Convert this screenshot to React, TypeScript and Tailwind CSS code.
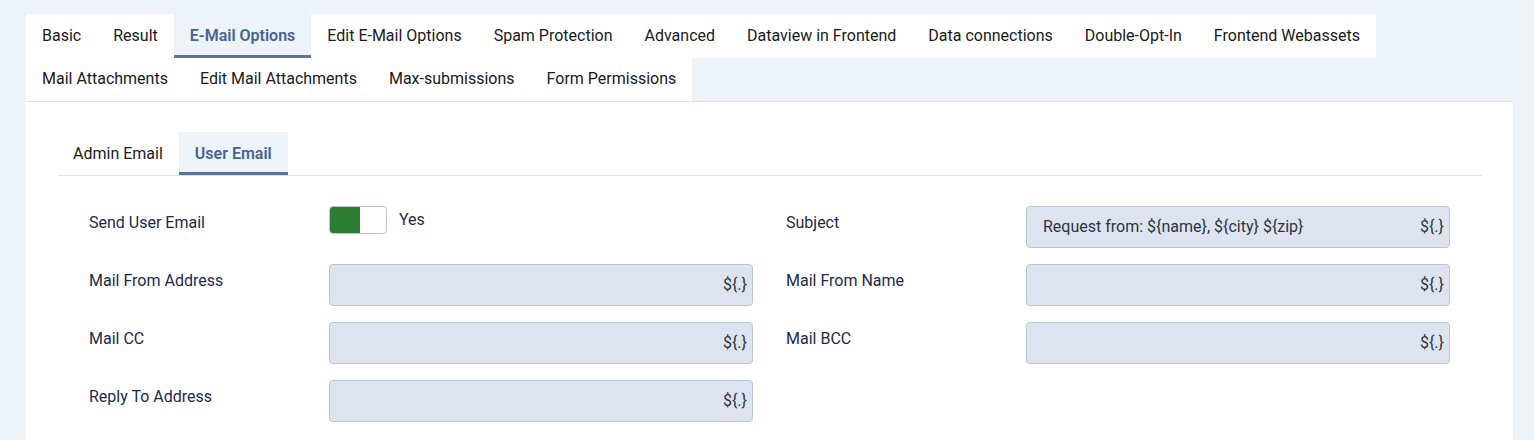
import React from "react";

const mainTabs = [
  "Basic",
  "Result",
  "E-Mail Options",
  "Edit E-Mail Options",
  "Spam Protection",
  "Advanced",
  "Dataview in Frontend",
  "Data connections",
  "Double-Opt-In",
  "Frontend Webassets",
  "Mail Attachments",
  "Edit Mail Attachments",
  "Max-submissions",
  "Form Permissions",
];

function Tab({ label, active }: { label: string; active?: boolean }) {
  return (
    <div
      className={
        active
          ? "h-[43.5px] px-4 flex items-center bg-[#eef3f9] border-b-[3px] border-[#5b7399] text-[#476391] font-semibold pt-[3px]"
          : "h-[43.5px] px-4 flex items-center bg-white text-[#1a1a1a]"
      }
    >
      {label}
    </div>
  );
}

function Toggle() {
  return (
    <div className="flex items-center gap-3">
      <div className="flex h-[28px] w-[58px] overflow-hidden rounded-[4px] border border-[#b9c4d4] bg-white">
        <div className="w-[30px] bg-[#2f7d33]" />
      </div>
      <span className="text-[#1c2a48]">Yes</span>
    </div>
  );
}

function Input({ value }: { value?: string }) {
  return (
    <div className="flex h-[42px] items-center justify-between rounded-[4px] border border-[#b9c4d6] bg-[#dde4f0] pl-4 pr-[5px] text-base text-[#2b3440]">
      <span>{value}</span>
      <span>{"${.}"}</span>
    </div>
  );
}

function Field({ label, children }: { label: string; children: React.ReactNode }) {
  return (
    <div className="flex">
      <div className="w-[240px] shrink-0 pt-[5px] leading-6 text-[#1c2a48]">{label}</div>
      <div className="flex-1">{children}</div>
    </div>
  );
}

export default function App() {
  return (
    <div
      className="min-h-[440px] bg-[#eef3fa] pl-[26px] pr-[21px] pt-[14px] text-base"
      style={{ fontFamily: "Roboto, 'Noto Sans', sans-serif" }}
    >
      <div className="flex flex-wrap">
        {mainTabs.map((t) => (
          <Tab key={t} label={t} active={t === "E-Mail Options"} />
        ))}
      </div>
      <div className="border-t border-[#dde2ea] bg-white pl-8 pr-[31px] pt-[30px] pb-5">
        <div className="flex border-b border-[#dde2ea]">
          <div className="h-[43px] pl-[15px] pr-4 flex items-center text-[#1a1a1a]">Admin Email</div>
          <div className="h-[43px] px-4 flex items-center bg-[#eef3f9] border-b-[3px] border-[#5b7399] text-[#476391] font-semibold pt-[3px]">
            User Email
          </div>
        </div>
        <div className="grid grid-cols-2 gap-x-[33px] gap-y-4 pl-[31px] pr-[32px] pt-[30px]">
          <Field label="Send User Email">
            <Toggle />
          </Field>
          <Field label="Subject">
            <Input value="Request from: ${name}, ${city} ${zip}" />
          </Field>
          <Field label="Mail From Address">
            <Input />
          </Field>
          <Field label="Mail From Name">
            <Input />
          </Field>
          <Field label="Mail CC">
            <Input />
          </Field>
          <Field label="Mail BCC">
            <Input />
          </Field>
          <Field label="Reply To Address">
            <Input />
          </Field>
        </div>
      </div>
    </div>
  );
}
